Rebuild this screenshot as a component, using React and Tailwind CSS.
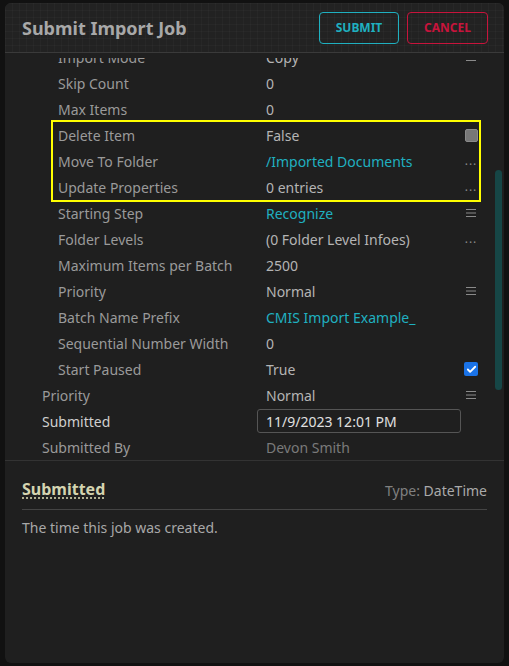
import { Check } from 'lucide-react';

const Menu = () => (
  <svg width="12" height="10" viewBox="0 0 12 10" className="text-[#8a8a8a]">
    <rect x="1" y="1" width="10" height="1" fill="currentColor" />
    <rect x="1" y="4.5" width="10" height="1" fill="currentColor" />
    <rect x="1" y="8" width="10" height="1" fill="currentColor" />
  </svg>
);

const Dots = () => <span className="text-[#8a8a8a] text-[12px] tracking-[1px] leading-none">...</span>;

const Box = ({ checked }) =>
  checked ? (
    <span className="w-[14px] h-[14px] rounded-[2px] bg-[#1a73e8] flex items-center justify-center">
      <Check size={11} strokeWidth={4} className="text-white" />
    </span>
  ) : (
    <span className="w-[13px] h-[13px] rounded-[2px] bg-[#777] border border-[#8a8a8a]" />
  );

const rows = [
  { label: 'Import Mode', value: 'Copy', icon: 'menu', indent: true },
  { label: 'Skip Count', value: '0', indent: true },
  { label: 'Max Items', value: '0', indent: true },
  { label: 'Delete Item', value: 'False', icon: 'box', indent: true },
  { label: 'Move To Folder', value: '/Imported Documents', link: true, icon: 'dots', indent: true },
  { label: 'Update Properties', value: '0 entries', icon: 'dots', indent: true },
  { label: 'Starting Step', value: 'Recognize', link: true, icon: 'menu', indent: true },
  { label: 'Folder Levels', value: '(0 Folder Level Infoes)', icon: 'dots', indent: true },
  { label: 'Maximum Items per Batch', value: '2500', indent: true },
  { label: 'Priority', value: 'Normal', icon: 'menu', indent: true },
  { label: 'Batch Name Prefix', value: 'CMIS Import Example_', link: true, indent: true },
  { label: 'Sequential Number Width', value: '0', indent: true },
  { label: 'Start Paused', value: 'True', icon: 'checked', indent: true },
  { label: 'Priority', value: 'Normal', icon: 'menu' },
];

const Icon = ({ type }) => {
  if (type === 'menu') return <Menu />;
  if (type === 'dots') return <Dots />;
  if (type === 'box') return <Box />;
  if (type === 'checked') return <Box checked />;
  return null;
};

const Row = ({ r }) => (
  <div className="h-[26px] flex items-center">
    <div className={`${r.indent ? 'pl-[53px]' : 'pl-[37px]'} w-[261px] shrink-0 text-[#9a9a9a]`}>{r.label}</div>
    <div className={`flex-1 ${r.link ? 'text-[#1fb0c0]' : 'text-[#b4b4b4]'}`}>{r.value}</div>
    <div className="w-[14px] flex justify-center mr-[26px]">
      <Icon type={r.icon} />
    </div>
  </div>
);

export default function App() {
  const top = rows.slice(0, 3);
  const hl = rows.slice(3, 6);
  const rest = rows.slice(6);
  return (
    <div className="w-[509px] h-[666px] bg-[#111] pt-[3px] px-[5px] font-['Noto_Sans','Open_Sans',sans-serif] text-[14px]">
      <div className="h-[660px] bg-[#1f1f1f] rounded-[6px] flex flex-col overflow-hidden">
        <div className="h-[50px] shrink-0 flex items-center pl-[17px] pr-[16px] border-b border-[#3a3a3a] bg-[#222] bg-[linear-gradient(rgba(255,255,255,0.025)_1px,transparent_1px),linear-gradient(90deg,rgba(255,255,255,0.025)_1px,transparent_1px)] bg-[size:7px_7px]">
          <h1 className="flex-1 text-[18px] font-bold text-[#a8a8a8] pt-[1px]">Submit Import Job</h1>
          <button className="w-[80px] h-[32px] rounded-[4px] border border-[#1fb0c0] text-[#1fb0c0] text-[12px] font-bold mr-[8px]">SUBMIT</button>
          <button className="w-[81px] h-[32px] rounded-[4px] border border-[#c8143c] text-[#c8143c] text-[12px] font-bold">CANCEL</button>
        </div>
        <div className="h-[408px] shrink-0 relative border-b border-[#333] pt-[5px]">
          <div className="h-[402px] overflow-hidden">
            <div className="-mt-[14px]">
              {top.map((r, i) => <Row key={i} r={r} />)}
              <div className="ml-[46px] mr-[23px] border-2 border-[#ffff00] -my-[2px]">
                <div className="-ml-[48px] -mr-[25px]">
                  {hl.map((r, i) => <Row key={i} r={r} />)}
                </div>
              </div>
              {rest.map((r, i) => <Row key={i} r={r} />)}
              <div className="h-[26px] flex items-center">
                <div className="pl-[37px] w-[252px] shrink-0 text-[#cfcfcf]">Submitted</div>
                <div className="w-[204px] h-[24px] border border-[#555] rounded-[3px] pl-[8px] flex items-center text-[#e0e0e0]">11/9/2023 12:01 PM</div>
              </div>
              <div className="h-[26px] flex items-center">
                <div className="pl-[37px] w-[261px] shrink-0 text-[#9a9a9a]">Submitted By</div>
                <div className="text-[#7a7a7a]">Devon Smith</div>
              </div>
            </div>
          </div>
          <div className="absolute right-[2px] top-[117px] w-[7px] h-[220px] rounded-full bg-[#164646]" />
        </div>
        <div className="px-[17px] pt-[16px]">
          <div className="flex items-end justify-between pb-[8px] border-b border-[#444]">
            <span className="text-[16px] font-bold text-[#d4d4b0] underline decoration-dotted decoration-[#d4d4b0] underline-offset-[3px]">Submitted</span>
            <span className="text-[#808080]">Type: <span className="text-[#aaa]">DateTime</span></span>
          </div>
          <p className="mt-[7px] text-[#a8a8a8]">The time this job was created.</p>
        </div>
      </div>
    </div>
  );
}
